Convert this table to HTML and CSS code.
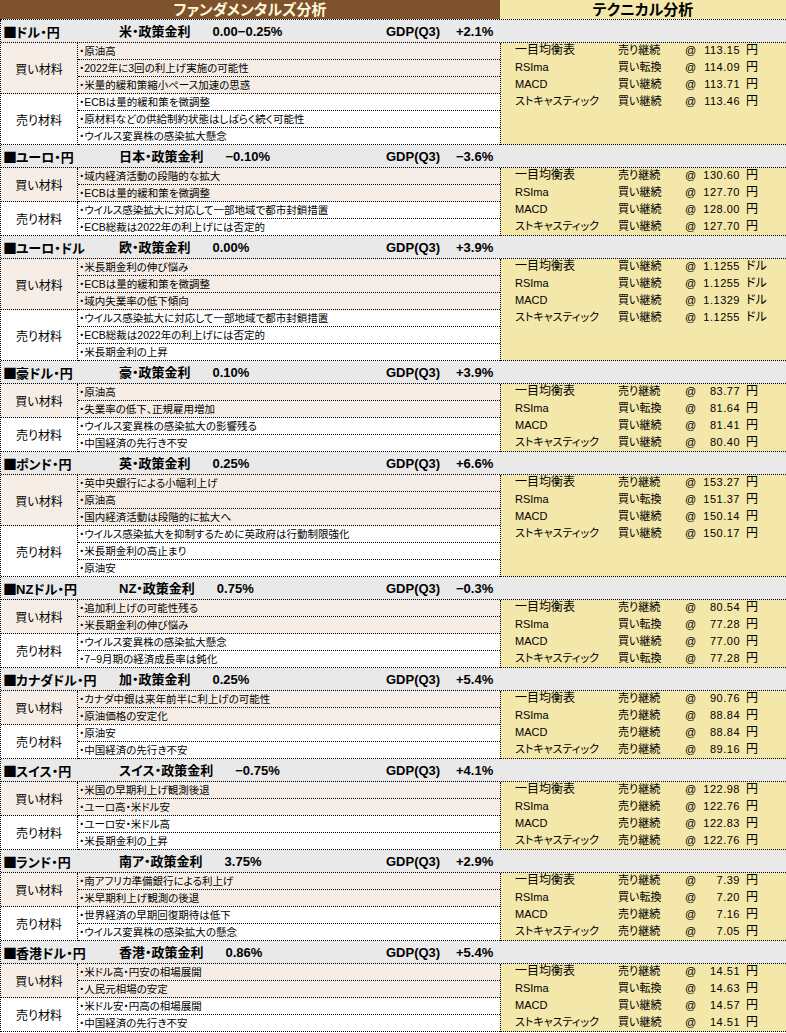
FILE: index.html
```html
<!DOCTYPE html>
<html lang="ja">
<head>
<meta charset="utf-8">
<title>ファンダメンタルズ・テクニカル分析</title>
<link rel="stylesheet" href="styles.css">
</head>
<body>
<div class="title">
  <div class="t-fund">ファンダメンタルズ分析</div>
  <div class="t-tech">テクニカル分析</div>
</div>
<div class="sheet">

<section class="sec">
  <div class="head"><span class="pair"><span class="sq">■</span>ドル・円</span><span class="pol"><span class="pol-name">米・政策金利</span><span class="rate">0.00−0.25%</span></span><span class="gdp">GDP(Q3)</span><span class="gdpv">+2.1%</span></div>
  <div class="tech span6">
    <div class="trow"><span class="tn">一目均衡表</span><span>売り継続</span><span>@</span><span class="num">113.15</span><span class="unit">円</span></div>
    <div class="trow"><span>RSIma</span><span>買い転換</span><span>@</span><span class="num">114.09</span><span class="unit">円</span></div>
    <div class="trow"><span>MACD</span><span>買い継続</span><span>@</span><span class="num">113.71</span><span class="unit">円</span></div>
    <div class="trow"><span>ストキャスティック</span><span>買い継続</span><span>@</span><span class="num">113.46</span><span class="unit">円</span></div>
  </div>
  <div class="label buy span3">買い材料</div>
  <div class="item buy">・原油高</div>
  <div class="item buy">・2022年に3回の利上げ実施の可能性</div>
  <div class="item buy">・米量的緩和策縮小ペース加速の思惑</div>
  <div class="label sell span3">売り材料</div>
  <div class="item">・ECBは量的緩和策を微調整</div>
  <div class="item">・原材料などの供給制約状態はしばらく続く可能性</div>
  <div class="item">・ウイルス変異株の感染拡大懸念</div>
</section>

<section class="sec">
  <div class="head"><span class="pair"><span class="sq">■</span>ユーロ・円</span><span class="pol"><span class="pol-name">日本・政策金利</span><span class="rate">−0.10%</span></span><span class="gdp">GDP(Q3)</span><span class="gdpv">−3.6%</span></div>
  <div class="tech span4">
    <div class="trow"><span class="tn">一目均衡表</span><span>売り継続</span><span>@</span><span class="num">130.60</span><span class="unit">円</span></div>
    <div class="trow"><span>RSIma</span><span>買い継続</span><span>@</span><span class="num">127.70</span><span class="unit">円</span></div>
    <div class="trow"><span>MACD</span><span>買い継続</span><span>@</span><span class="num">128.00</span><span class="unit">円</span></div>
    <div class="trow"><span>ストキャスティック</span><span>買い継続</span><span>@</span><span class="num">127.70</span><span class="unit">円</span></div>
  </div>
  <div class="label buy span2">買い材料</div>
  <div class="item buy">・域内経済活動の段階的な拡大</div>
  <div class="item buy">・ECBは量的緩和策を微調整</div>
  <div class="label sell span2">売り材料</div>
  <div class="item">・ウイルス感染拡大に対応して一部地域で都市封鎖措置</div>
  <div class="item">・ECB総裁は2022年の利上げには否定的</div>
</section>

<section class="sec">
  <div class="head"><span class="pair"><span class="sq">■</span>ユーロ・ドル</span><span class="pol"><span class="pol-name">欧・政策金利</span><span class="rate">0.00%</span></span><span class="gdp">GDP(Q3)</span><span class="gdpv">+3.9%</span></div>
  <div class="tech span6">
    <div class="trow"><span class="tn">一目均衡表</span><span>買い継続</span><span>@</span><span class="num">1.1255</span><span class="unit">ドル</span></div>
    <div class="trow"><span>RSIma</span><span>買い継続</span><span>@</span><span class="num">1.1255</span><span class="unit">ドル</span></div>
    <div class="trow"><span>MACD</span><span>買い継続</span><span>@</span><span class="num">1.1329</span><span class="unit">ドル</span></div>
    <div class="trow"><span>ストキャスティック</span><span>買い継続</span><span>@</span><span class="num">1.1255</span><span class="unit">ドル</span></div>
  </div>
  <div class="label buy span3">買い材料</div>
  <div class="item buy">・米長期金利の伸び悩み</div>
  <div class="item buy">・ECBは量的緩和策を微調整</div>
  <div class="item buy">・域内失業率の低下傾向</div>
  <div class="label sell span3">売り材料</div>
  <div class="item">・ウイルス感染拡大に対応して一部地域で都市封鎖措置</div>
  <div class="item">・ECB総裁は2022年の利上げには否定的</div>
  <div class="item">・米長期金利の上昇</div>
</section>

<section class="sec">
  <div class="head"><span class="pair"><span class="sq">■</span>豪ドル・円</span><span class="pol"><span class="pol-name">豪・政策金利</span><span class="rate">0.10%</span></span><span class="gdp">GDP(Q3)</span><span class="gdpv">+3.9%</span></div>
  <div class="tech span4">
    <div class="trow"><span class="tn">一目均衡表</span><span>売り継続</span><span>@</span><span class="num">83.77</span><span class="unit">円</span></div>
    <div class="trow"><span>RSIma</span><span>買い転換</span><span>@</span><span class="num">81.64</span><span class="unit">円</span></div>
    <div class="trow"><span>MACD</span><span>買い継続</span><span>@</span><span class="num">81.41</span><span class="unit">円</span></div>
    <div class="trow"><span>ストキャスティック</span><span>買い継続</span><span>@</span><span class="num">80.40</span><span class="unit">円</span></div>
  </div>
  <div class="label buy span2">買い材料</div>
  <div class="item buy">・原油高</div>
  <div class="item buy">・失業率の低下、正規雇用増加</div>
  <div class="label sell span2">売り材料</div>
  <div class="item">・ウイルス変異株の感染拡大の影響残る</div>
  <div class="item">・中国経済の先行き不安</div>
</section>

<section class="sec">
  <div class="head"><span class="pair"><span class="sq">■</span>ポンド・円</span><span class="pol"><span class="pol-name">英・政策金利</span><span class="rate">0.25%</span></span><span class="gdp">GDP(Q3)</span><span class="gdpv">+6.6%</span></div>
  <div class="tech span6">
    <div class="trow"><span class="tn">一目均衡表</span><span>売り継続</span><span>@</span><span class="num">153.27</span><span class="unit">円</span></div>
    <div class="trow"><span>RSIma</span><span>買い転換</span><span>@</span><span class="num">151.37</span><span class="unit">円</span></div>
    <div class="trow"><span>MACD</span><span>買い継続</span><span>@</span><span class="num">150.14</span><span class="unit">円</span></div>
    <div class="trow"><span>ストキャスティック</span><span>買い継続</span><span>@</span><span class="num">150.17</span><span class="unit">円</span></div>
  </div>
  <div class="label buy span3">買い材料</div>
  <div class="item buy">・英中央銀行による小幅利上げ</div>
  <div class="item buy">・原油高</div>
  <div class="item buy">・国内経済活動は段階的に拡大へ</div>
  <div class="label sell span3">売り材料</div>
  <div class="item">・ウイルス感染拡大を抑制するために英政府は行動制限強化</div>
  <div class="item">・米長期金利の高止まり</div>
  <div class="item">・原油安</div>
</section>

<section class="sec">
  <div class="head"><span class="pair"><span class="sq">■</span>NZドル・円</span><span class="pol"><span class="pol-name">NZ・政策金利</span><span class="rate">0.75%</span></span><span class="gdp">GDP(Q3)</span><span class="gdpv">−0.3%</span></div>
  <div class="tech span4">
    <div class="trow"><span class="tn">一目均衡表</span><span>売り継続</span><span>@</span><span class="num">80.54</span><span class="unit">円</span></div>
    <div class="trow"><span>RSIma</span><span>買い転換</span><span>@</span><span class="num">77.28</span><span class="unit">円</span></div>
    <div class="trow"><span>MACD</span><span>買い継続</span><span>@</span><span class="num">77.00</span><span class="unit">円</span></div>
    <div class="trow"><span>ストキャスティック</span><span>買い転換</span><span>@</span><span class="num">77.28</span><span class="unit">円</span></div>
  </div>
  <div class="label buy span2">買い材料</div>
  <div class="item buy">・追加利上げの可能性残る</div>
  <div class="item buy">・米長期金利の伸び悩み</div>
  <div class="label sell span2">売り材料</div>
  <div class="item">・ウイルス変異株の感染拡大懸念</div>
  <div class="item">・7−9月期の経済成長率は鈍化</div>
</section>

<section class="sec">
  <div class="head"><span class="pair"><span class="sq">■</span>カナダドル・円</span><span class="pol"><span class="pol-name">加・政策金利</span><span class="rate">0.25%</span></span><span class="gdp">GDP(Q3)</span><span class="gdpv">+5.4%</span></div>
  <div class="tech span4">
    <div class="trow"><span class="tn">一目均衡表</span><span>売り継続</span><span>@</span><span class="num">90.76</span><span class="unit">円</span></div>
    <div class="trow"><span>RSIma</span><span>売り継続</span><span>@</span><span class="num">88.84</span><span class="unit">円</span></div>
    <div class="trow"><span>MACD</span><span>売り継続</span><span>@</span><span class="num">88.84</span><span class="unit">円</span></div>
    <div class="trow"><span>ストキャスティック</span><span>売り継続</span><span>@</span><span class="num">89.16</span><span class="unit">円</span></div>
  </div>
  <div class="label buy span2">買い材料</div>
  <div class="item buy">・カナダ中銀は来年前半に利上げの可能性</div>
  <div class="item buy">・原油価格の安定化</div>
  <div class="label sell span2">売り材料</div>
  <div class="item">・原油安</div>
  <div class="item">・中国経済の先行き不安</div>
</section>

<section class="sec">
  <div class="head"><span class="pair"><span class="sq">■</span>スイス・円</span><span class="pol"><span class="pol-name">スイス・政策金利</span><span class="rate">−0.75%</span></span><span class="gdp">GDP(Q3)</span><span class="gdpv">+4.1%</span></div>
  <div class="tech span4">
    <div class="trow"><span class="tn">一目均衡表</span><span>売り継続</span><span>@</span><span class="num">122.98</span><span class="unit">円</span></div>
    <div class="trow"><span>RSIma</span><span>売り継続</span><span>@</span><span class="num">122.76</span><span class="unit">円</span></div>
    <div class="trow"><span>MACD</span><span>売り継続</span><span>@</span><span class="num">122.83</span><span class="unit">円</span></div>
    <div class="trow"><span>ストキャスティック</span><span>売り継続</span><span>@</span><span class="num">122.76</span><span class="unit">円</span></div>
  </div>
  <div class="label buy span2">買い材料</div>
  <div class="item buy">・米国の早期利上げ観測後退</div>
  <div class="item buy">・ユーロ高・米ドル安</div>
  <div class="label sell span2">売り材料</div>
  <div class="item">・ユーロ安・米ドル高</div>
  <div class="item">・米長期金利の上昇</div>
</section>

<section class="sec">
  <div class="head"><span class="pair"><span class="sq">■</span>ランド・円</span><span class="pol"><span class="pol-name">南ア・政策金利</span><span class="rate">3.75%</span></span><span class="gdp">GDP(Q3)</span><span class="gdpv">+2.9%</span></div>
  <div class="tech span4">
    <div class="trow"><span class="tn">一目均衡表</span><span>売り継続</span><span>@</span><span class="num">7.39</span><span class="unit">円</span></div>
    <div class="trow"><span>RSIma</span><span>買い転換</span><span>@</span><span class="num">7.20</span><span class="unit">円</span></div>
    <div class="trow"><span>MACD</span><span>売り継続</span><span>@</span><span class="num">7.16</span><span class="unit">円</span></div>
    <div class="trow"><span>ストキャスティック</span><span>売り継続</span><span>@</span><span class="num">7.05</span><span class="unit">円</span></div>
  </div>
  <div class="label buy span2">買い材料</div>
  <div class="item buy">・南アフリカ準備銀行による利上げ</div>
  <div class="item buy">・米早期利上げ観測の後退</div>
  <div class="label sell span2">売り材料</div>
  <div class="item">・世界経済の早期回復期待は低下</div>
  <div class="item">・ウイルス変異株の感染拡大の懸念</div>
</section>

<section class="sec">
  <div class="head"><span class="pair"><span class="sq">■</span>香港ドル・円</span><span class="pol"><span class="pol-name">香港・政策金利</span><span class="rate">0.86%</span></span><span class="gdp">GDP(Q3)</span><span class="gdpv">+5.4%</span></div>
  <div class="tech span4">
    <div class="trow"><span class="tn">一目均衡表</span><span>売り継続</span><span>@</span><span class="num">14.51</span><span class="unit">円</span></div>
    <div class="trow"><span>RSIma</span><span>買い転換</span><span>@</span><span class="num">14.63</span><span class="unit">円</span></div>
    <div class="trow"><span>MACD</span><span>買い継続</span><span>@</span><span class="num">14.57</span><span class="unit">円</span></div>
    <div class="trow"><span>ストキャスティック</span><span>買い継続</span><span>@</span><span class="num">14.51</span><span class="unit">円</span></div>
  </div>
  <div class="label buy span2">買い材料</div>
  <div class="item buy">・米ドル高・円安の相場展開</div>
  <div class="item buy">・人民元相場の安定</div>
  <div class="label sell span2">売り材料</div>
  <div class="item">・米ドル安・円高の相場展開</div>
  <div class="item">・中国経済の先行き不安</div>
</section>

</div>
</body>
</html>
```

FILE: styles.css
```css
* { box-sizing: border-box; }

body {
  margin: 0;
  background: #ffffff;
  color: #000000;
  font-family: "Liberation Sans", "Noto Sans CJK JP", sans-serif;
  font-feature-settings: "palt";
  width: 786px;
}

.title {
  display: grid;
  grid-template-columns: 500px 1fr;
  height: 20px;
  border-bottom: 1px dotted #000;
}

.t-fund,
.t-tech {
  font-size: 15px;
  font-weight: bold;
  text-align: center;
  line-height: 19px;
}

.t-fund {
  background: #7e522c;
  color: #fff6d8;
}

.t-tech {
  background: #f3e7a9;
  color: #000;
}

.sheet {
  border-left: 1px dotted #000;
}

.sec {
  display: grid;
  grid-template-columns: 77px 422px 1fr;
  grid-template-rows: 23px;
  grid-auto-rows: 17px;
}

.head {
  grid-column: 1 / -1;
  grid-row: 1;
  background: #e9e9e9;
  border-bottom: 1px dotted #000;
  display: grid;
  grid-template-columns: 116px 267px 70px 1fr;
  align-items: center;
  padding-left: 2px;
  font-size: 13px;
  font-weight: bold;
  line-height: 22px;
  white-space: nowrap;
}

.sq {
  font-family: "Noto Sans CJK JP", sans-serif;
  font-feature-settings: normal;
  font-size: 14px;
  margin-right: -1px;
}

.pol {
  display: flex;
  gap: 22px;
}

.label {
  grid-column: 1;
  border-right: 1px dotted #000;
  border-bottom: 1px dotted #000;
  display: flex;
  align-items: center;
  justify-content: center;
  font-size: 12px;
}

.span2 { grid-row: span 2; }
.span3 { grid-row: span 3; }

.item {
  grid-column: 2;
  border-bottom: 1px dotted #000;
  font-size: 10.5px;
  line-height: 16px;
  padding-left: 1px;
  white-space: nowrap;
  overflow: hidden;
}

.buy { background: #f6eee6; }

.tech {
  grid-column: 3;
  background: #f3e7a9;
  border-left: 1px dotted #000;
  border-bottom: 1px dotted #000;
  padding-left: 14px;
  font-size: 11px;
}

.span4 { grid-row: 2 / span 4; }
.span6 { grid-row: 2 / span 6; }

.trow {
  display: grid;
  grid-template-columns: 103px 67px 12px 43px auto;
  height: 17px;
  line-height: 15px;
  white-space: nowrap;
}

.trow .tn {
  font-size: 12px;
}

.trow .num {
  text-align: right;
  letter-spacing: 0.5px;
}

.trow .unit {
  padding-left: 6px;
  font-size: 12px;
}
```
